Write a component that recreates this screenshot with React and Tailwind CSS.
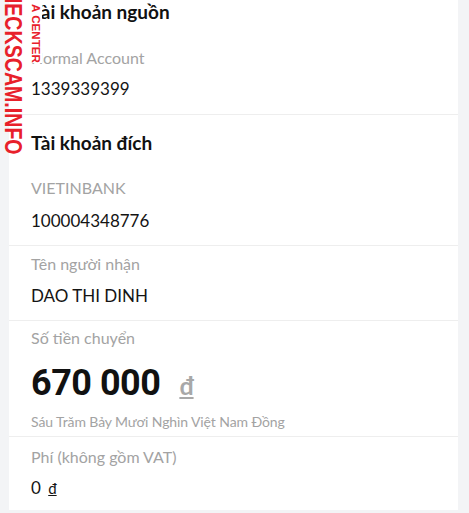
import React from 'react';

const sans = "font-['Lato','Noto_Sans',sans-serif]";

const Label = ({ children, className = '' }) => (
  <p className={`text-[16px] leading-6 text-[#a3a3a3] ${className}`}>{children}</p>
);

const Value = ({ children, className = '' }) => (
  <p className={`text-[17px] leading-6 text-[#141414] ${className}`}>{children}</p>
);

const Title = ({ children }) => (
  <h2 className="text-[19px] leading-6 font-bold text-[#111111]">{children}</h2>
);

export default function App() {
  return (
    <div className={`relative h-[513px] w-[469px] overflow-hidden bg-[#f3f4f6] ${sans}`}>
      <div className="ml-[9px] flex w-[449px] flex-col bg-white">
        {/* Source account */}
        <section className="border-b border-[#eeeeee] pl-[22px] pb-[13px]">
          <Title>Tài khoản nguồn</Title>
          <Label className="mt-[22px]">Normal Account</Label>
          <Value className="mt-[7px]">1339339399</Value>
        </section>

        {/* Destination account */}
        <section className="border-b border-[#eeeeee] pl-[22px] pt-[16px] pb-[12px]">
          <Title>Tài khoản đích</Title>
          <Label className="mt-[21px] text-[15px]">VIETINBANK</Label>
          <Value className="mt-[9px]">100004348776</Value>
        </section>

        <section className="border-b border-[#eeeeee] pl-[22px] pt-[6px] pb-[12px]">
          <Label>Tên người nhận</Label>
          <Value className="mt-[8px]">DAO THI DINH</Value>
        </section>

        {/* Amount */}
        <section className="border-b border-[#eeeeee] pl-[22px] pt-[5px] pb-[4px]">
          <Label>Số tiền chuyển</Label>
          <div className="mt-[11px] flex h-11 items-baseline">
            <span className="font-['Roboto','Liberation_Sans',sans-serif] text-[36px] leading-[44px] font-bold tracking-[-0.5px] text-[#111111]">
              670 000
            </span>
            <span className="ml-[19px] text-[25px] font-bold text-[#a8a8a8] underline decoration-2 underline-offset-2">đ</span>
          </div>
          <p className="mt-[7px] text-[14px] leading-5 tracking-[-0.1px] text-[#a3a3a3]">Sáu Trăm Bảy Mươi Nghìn Việt Nam Đồng</p>
        </section>

        {/* Fee */}
        <section className="pl-[22px] pt-[8px] pb-[10px]">
          <Label>Phí (không gồm VAT)</Label>
          <Value className="mt-[7px]">
            0 <span className="ml-[3px] underline text-[15px]">đ</span>
          </Value>
        </section>
      </div>

      {/* watermark */}
      <span
        className="pointer-events-none absolute left-[24.5px] top-[-25px] origin-top-left whitespace-nowrap font-['Liberation_Sans',sans-serif] text-[19.6px] leading-none font-bold text-[#e8202a]"
        style={{ transform: 'rotate(90deg) scaleY(1.22)' }}
      >
        CHECKSCAM.INFO
      </span>
      <span
        className="pointer-events-none absolute left-[41.5px] top-[4px] origin-top-left whitespace-nowrap bg-white font-['Liberation_Sans',sans-serif] text-[11.6px] leading-none font-bold text-[#e8202a] rotate-90"
      >
        A CENTER
      </span>
    </div>
  );
}
